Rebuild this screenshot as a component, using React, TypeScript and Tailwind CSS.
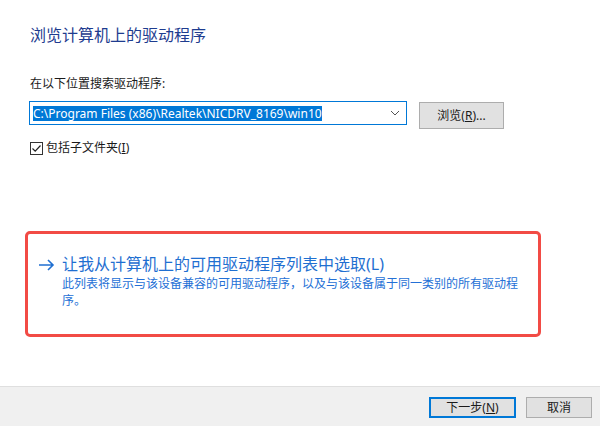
const App = () => {
  return (
    <div className="w-[600px] h-[426px] flex flex-col bg-white text-[12px] text-[#1a1a1a] font-['Noto_Sans','Noto_Sans_CJK_SC',sans-serif]">
      {/* Body */}
      <div className="flex-1 flex flex-col pl-[30px] pt-[24px]">
        <h1 className="text-[16px] leading-[22px] text-[#1e3c8f] font-normal">浏览计算机上的驱动程序</h1>

        <div className="mt-[30px] leading-[16px]">在以下位置搜索驱动程序:</div>

        <div className="mt-[9px] -ml-px flex items-start">
          <div className="w-[378px] h-[24px] border border-[#0078d7] flex items-center pl-[3px] pr-[6px]">
            <span className="bg-[#0078d7] text-white leading-[15px] whitespace-nowrap">
              C:\Program Files (x86)\Realtek\NICDRV_8169\win10
            </span>
            <svg className="ml-auto" width="10" height="6" viewBox="0 0 10 6">
              <path d="M1 1 L5 5 L9 1" fill="none" stroke="#555" strokeWidth="1" />
            </svg>
          </div>
          <button className="ml-[12px] mt-px w-[85px] h-[27px] bg-[#e1e1e1] border border-[#adadad] leading-[16px]">
            浏览(<span className="underline">R</span>)...
          </button>
        </div>

        <label className="mt-[11px] flex items-center gap-[3px] leading-[16px]">
          <span className="w-[13px] h-[13px] border border-[#333] flex items-center justify-center">
            <svg width="11" height="11" viewBox="0 0 11 11">
              <path d="M1.5 5.5 L4.2 8.2 L9.5 2.5" fill="none" stroke="#222" strokeWidth="1.2" />
            </svg>
          </span>
          <span>
            包括子文件夹(<span className="underline">I</span>)
          </span>
        </label>

        {/* Highlighted option */}
        <div className="mt-[75px] -ml-[5px] w-[516px] h-[106px] border-[3px] border-[#f24b45] rounded-[5px] flex items-start pt-[19px] pl-[10px]">
          <svg className="mt-[6px] shrink-0" width="17" height="12" viewBox="0 0 17 12">
            <path d="M1 6 H15 M10 1 L15 6 L10 11" fill="none" stroke="#1f6fd1" strokeWidth="1.6" />
          </svg>
          <div className="ml-[7px] flex flex-col">
            <div className="text-[16px] leading-[22px] text-[#1f6fd1]">让我从计算机上的可用驱动程序列表中选取(L)</div>
            <p className="w-[460px] leading-[17px] text-[#2470d6]">
              此列表将显示与该设备兼容的可用驱动程序，以及与该设备属于同一类别的所有驱动程序。
            </p>
          </div>
        </div>
      </div>

      {/* Footer */}
      <div className="h-[40px] bg-[#f0f0f0] border-t border-[#dfdfdf] flex items-start justify-end gap-[10px] pt-[10px] pr-[8px]">
        <button className="w-[87px] h-[21px] bg-[#e1e1e1] border-2 border-[#0078d7] leading-[16px]">
          下一步(<span className="underline">N</span>)
        </button>
        <button className="w-[66px] h-[21px] bg-[#e1e1e1] border border-[#adadad] leading-[16px]">取消</button>
      </div>
    </div>
  );
};

export default App;
